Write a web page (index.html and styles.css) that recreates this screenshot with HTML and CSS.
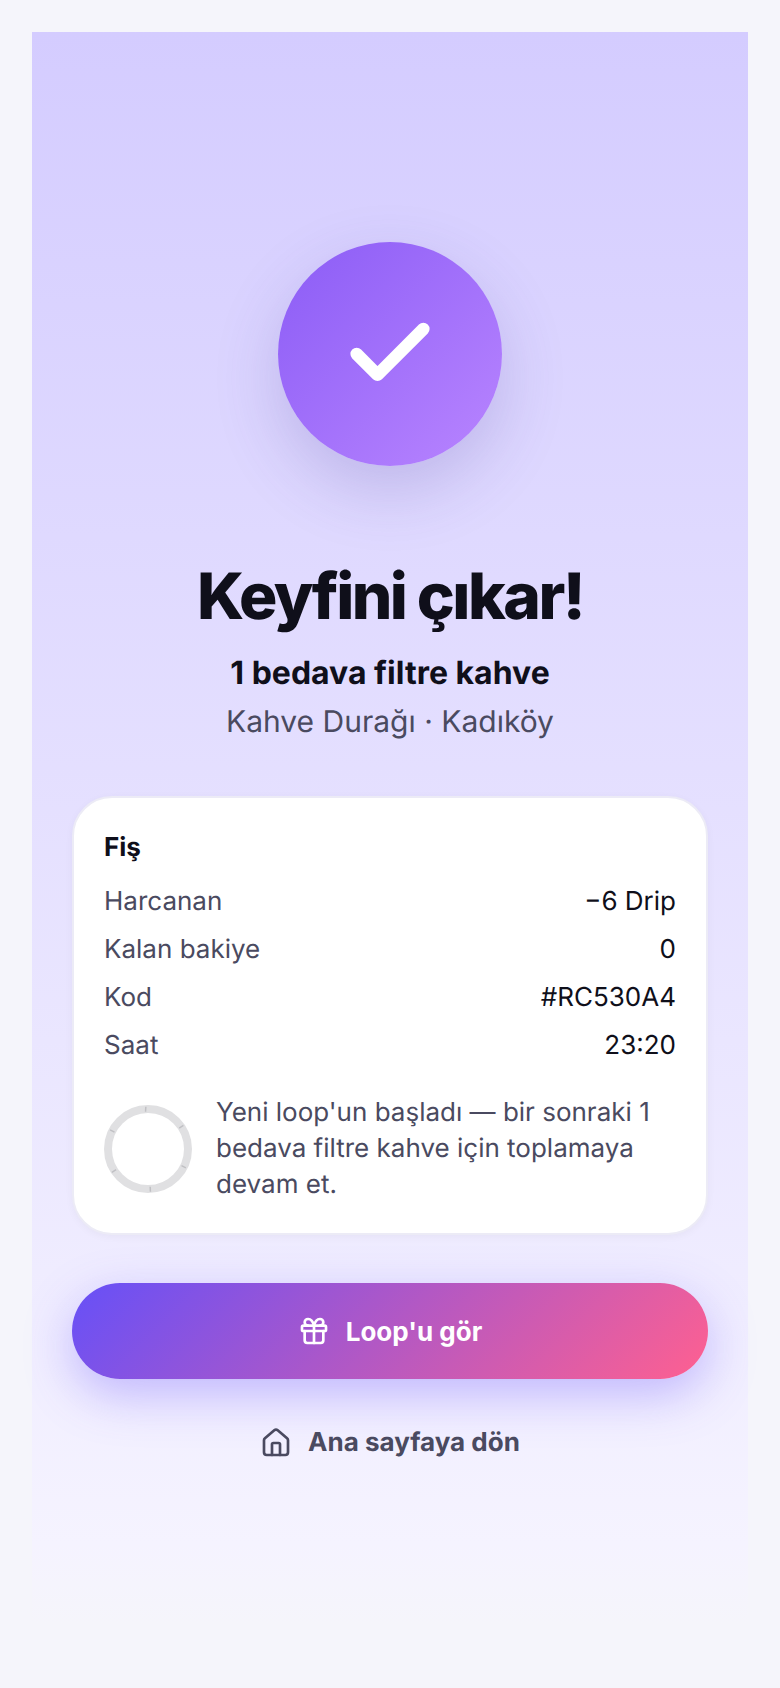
FILE: index.html
```html
<!DOCTYPE html>
<html lang="tr">
<head>
  <meta charset="UTF-8">
  <meta name="viewport" content="width=device-width, initial-scale=1.0">
  <title>Keyfini çıkar!</title>
  <link rel="stylesheet" href="styles.css">
</head>
<body>

  <div class="screen">
    <div class="check-circle">
      <svg class="check-icon" viewBox="0 0 24 24" fill="none" stroke="#fff" stroke-width="3" stroke-linecap="round" stroke-linejoin="round">
        <path d="M20 6 9 17l-5-5"/>
      </svg>
    </div>

    <h1 class="title">Keyfini çıkar!</h1>
    <p class="reward">1 bedava filtre kahve</p>
    <p class="place">Kahve Durağı · Kadıköy</p>

    <div class="receipt">
      <h2 class="receipt-title">Fiş</h2>
      <div class="receipt-row"><span>Harcanan</span><span class="value">−6 Drip</span></div>
      <div class="receipt-row"><span>Kalan bakiye</span><span class="value">0</span></div>
      <div class="receipt-row"><span>Kod</span><span class="value">#RC530A4</span></div>
      <div class="receipt-row"><span>Saat</span><span class="value">23:20</span></div>

      <div class="loop-note">
        <svg class="loop-ring" viewBox="0 0 88 88" fill="none">
          <circle cx="44" cy="44" r="40" stroke="#e0e0e2" stroke-width="8"/>
          <g stroke="#c0c0c4" stroke-width="1.5">
            <path d="M41.55 6.8 41.85 1.8"/>
            <path d="M75.2 23.1 79.4 20.3"/>
            <path d="M77.5 60.6 81.9 62.8"/>
            <path d="M46.15 81.8 46.45 86.8"/>
            <path d="M12.1 64.65 7.9 67.35"/>
            <path d="M10.5 27.1 6.1 24.9"/>
          </g>
        </svg>
        <p class="loop-text">Yeni loop'un başladı — bir sonraki 1 bedava filtre kahve için toplamaya devam et.</p>
      </div>
    </div>

    <button class="primary-btn" type="button">
      <svg class="btn-icon" viewBox="0 0 24 24" fill="none" stroke="#fff" stroke-width="2" stroke-linecap="round" stroke-linejoin="round">
        <rect x="3" y="8" width="18" height="4" rx="1"/>
        <path d="M12 8v13"/>
        <path d="M19 12v7a2 2 0 0 1-2 2H7a2 2 0 0 1-2-2v-7"/>
        <path d="M7.5 8a2.5 2.5 0 0 1 0-5A4.8 8 0 0 1 12 8a4.8 8 0 0 1 4.5-5 2.5 2.5 0 0 1 0 5"/>
      </svg>
      Loop'u gör
    </button>

    <a class="home-link" href="#">
      <svg class="btn-icon" viewBox="0 0 24 24" fill="none" stroke="#4a4a60" stroke-width="2" stroke-linecap="round" stroke-linejoin="round">
        <path d="M15 21v-8a1 1 0 0 0-1-1h-4a1 1 0 0 0-1 1v8"/>
        <path d="M3 10a2 2 0 0 1 .709-1.528l7-5.999a2 2 0 0 1 2.582 0l7 5.999A2 2 0 0 1 21 10v9a2 2 0 0 1-2 2H5a2 2 0 0 1-2-2z"/>
      </svg>
      Ana sayfaya dön
    </a>
  </div>

</body>
</html>
```

FILE: styles.css
```css
* {
  box-sizing: border-box;
}

body {
  font-family: 'Inter', sans-serif;
  font-variation-settings: 'opsz' 14;
  text-rendering: geometricPrecision;
  background-color: #f5f5fb;
  margin: 0;
  padding: 32px 32px 64px;
  min-height: 1688px;
}

.screen {
  height: 1592px;
  padding: 210px 40px 0;
  background: linear-gradient(180deg, #d4ccff 0%, #f5f3ff 95%, #f5f5fb 100%);
  display: flex;
  flex-direction: column;
  align-items: center;
}

.check-circle {
  width: 224px;
  height: 224px;
  border-radius: 50%;
  background: linear-gradient(135deg, #8b5cf6, #b985ff);
  box-shadow: 0 24px 64px rgba(80, 70, 160, 0.22);
  display: flex;
  align-items: center;
  justify-content: center;
  flex-shrink: 0;
}

.check-icon {
  width: 100px;
  height: 100px;
}

.title {
  margin: 93px 0 0;
  font-size: 64px;
  line-height: 76px;
  font-weight: 800;
  font-variation-settings: 'opsz' 32;
  letter-spacing: -2.56px;
  color: #0f0f1a;
}

.reward {
  margin: 16px 0 0;
  font-size: 32px;
  line-height: 44px;
  font-weight: 700;
  color: #0f0f1a;
}

.place {
  margin: 5px 0 0;
  font-size: 30px;
  line-height: 44px;
  color: #4a4a60;
}

.receipt {
  width: 100%;
  margin-top: 52px;
  padding: 32px 30px 30px;
  background-color: white;
  border: 2px solid #ecebf6;
  border-radius: 40px;
  box-shadow: 0 2px 8px rgba(15, 15, 26, 0.04);
}

.receipt-title {
  margin: 0 0 12px;
  font-size: 26px;
  line-height: 36px;
  font-weight: 700;
  color: #0f0f1a;
}

.receipt-row {
  display: flex;
  justify-content: space-between;
  font-size: 26px;
  line-height: 48px;
  color: #4a4a60;
}

.value {
  color: #0f0f1a;
}

.loop-note {
  display: flex;
  align-items: center;
  gap: 24px;
  margin-top: 25px;
}

.loop-ring {
  width: 88px;
  height: 88px;
  flex-shrink: 0;
}

.loop-text {
  margin: 0;
  font-size: 26px;
  line-height: 36px;
  color: #4a4a60;
}

.primary-btn {
  width: 100%;
  height: 96px;
  margin-top: 48px;
  flex-shrink: 0;
  border: none;
  border-radius: 48px;
  background: linear-gradient(135deg, #6650f8, #ff6090);
  box-shadow: 0 16px 48px rgba(102, 80, 248, 0.35);
  color: white;
  font-family: inherit;
  font-size: 26px;
  font-weight: 700;
  display: flex;
  align-items: center;
  justify-content: center;
  gap: 16px;
}

.btn-icon {
  width: 32px;
  height: 32px;
}

.home-link {
  margin-top: 46px;
  font-size: 26px;
  line-height: 36px;
  font-weight: 700;
  color: #4a4a60;
  text-decoration: none;
  display: flex;
  align-items: center;
  gap: 16px;
}
```
